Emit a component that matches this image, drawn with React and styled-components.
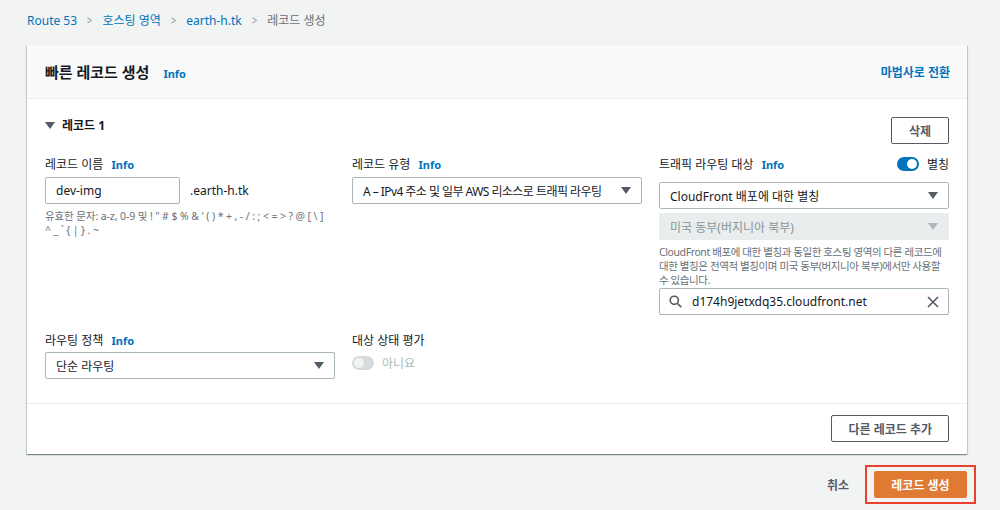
import React from "react"
import styled, { createGlobalStyle } from "styled-components"

const colors = {
	page: "#f2f3f3",
	text: "#16191f",
	grey: "#687078",
	link: "#0073bb",
	border: "#aab7b8",
	divider: "#eaeded",
	orange: "#e07a32",
}

const GlobalStyle = createGlobalStyle`
	html, body {
		margin: 0;
		background: ${colors.page};
		font-family: "Noto Sans", "Noto Sans CJK KR", sans-serif;
		color: ${colors.text};
		font-size: 12px;
	}
	* { box-sizing: border-box; }
`

const Page = styled.div`
	width: 1000px;
	height: 510px;
	padding: 11px 33px 0 27px;
	overflow: hidden;
`

const Breadcrumbs = styled.nav`
	display: flex;
	align-items: center;
	gap: 9px;
	height: 18px;
	font-size: 12px;
	margin-bottom: 16px;
`

const Crumb = styled.span`
	color: ${p => (p.$current ? colors.grey : colors.link)};
`

const Chevron = styled.span`
	color: #879596;
	font-size: 13px;
	transform: scaleX(0.7);
`

const Card = styled.section`
	background: #fff;
	box-shadow: 0 1px 1px 0 rgba(0, 28, 36, 0.3), 1px 1px 1px 0 rgba(0, 28, 36, 0.15),
		-1px 1px 1px 0 rgba(0, 28, 36, 0.15);
`

const CardHeader = styled.header`
	display: flex;
	align-items: center;
	justify-content: space-between;
	height: 54px;
	padding: 0 17px 0 18px;
	background: #fafafa;
	border-bottom: 1px solid ${colors.divider};
`

const Title = styled.h2`
	margin: 0;
	font-size: 15px;
	font-weight: 700;
	display: flex;
	align-items: baseline;
	gap: 14px;
`

const Info = styled.a`
	color: ${colors.link};
	font-weight: 700;
	font-size: 11px;
	margin-left: ${p => p.$gap ?? 5}px;
`

const HeaderLink = styled.a`
	color: ${colors.link};
	font-weight: 700;
	font-size: 12px;
`

const CardBody = styled.div`
	padding: 18px 18px 24px 18px;
	border-bottom: 1px solid ${colors.divider};
`

const RecordHead = styled.div`
	display: flex;
	align-items: flex-start;
	justify-content: space-between;
	height: 27px;
	margin-bottom: 12px;
`

const RecordTitle = styled.div`
	display: flex;
	align-items: center;
	gap: 7px;
	font-weight: 700;
	font-size: 12px;
	margin-top: -1px;
`

const Button = styled.button`
	height: 27px;
	padding: 0 ${p => p.$pad || 16}px;
	background: #fff;
	border: 1px solid #545b64;
	border-radius: 2px;
	font-family: inherit;
	font-size: 12px;
	font-weight: 700;
	color: #545b64;
`

const Grid = styled.div`
	display: grid;
	grid-template-columns: repeat(3, 290px);
	column-gap: 17px;
	row-gap: 17px;
`

const Field = styled.div`
	display: flex;
	flex-direction: column;
`

const LabelRow = styled.div`
	display: flex;
	align-items: center;
	justify-content: space-between;
	height: 16px;
	margin-bottom: ${p => p.$mb || 5}px;
	font-size: 12px;
`

const ToggleWrap = styled.span`
	display: flex;
	align-items: center;
	gap: 8px;
	color: ${p => (p.$off ? "#aab7b8" : colors.text)};
`

const Track = styled.span`
	position: relative;
	width: 22px;
	height: 14px;
	border-radius: 7px;
	background: ${p => (p.$on ? colors.link : "#d5dbdb")};
	&::after {
		content: "";
		position: absolute;
		top: 2px;
		left: ${p => (p.$on ? 10 : 2)}px;
		width: 10px;
		height: 10px;
		border-radius: 50%;
		background: ${p => (p.$on ? "#fff" : "#f2f3f3")};
	}
`

const InputRow = styled.div`
	display: flex;
	align-items: center;
	gap: 10px;
`

const Input = styled.div`
	display: flex;
	align-items: center;
	gap: 10px;
	height: 27px;
	width: ${p => p.$w || "100%"};
	padding: 0 ${p => (p.$icon ? 9 : 10)}px;
	border: 1px solid ${p => (p.$disabled ? "#eaeded" : colors.border)};
	border-radius: 2px;
	background: ${p => (p.$disabled ? "#eaeded" : "#fff")};
	color: ${p => (p.$disabled ? "#879596" : colors.text)};
	font-size: 12px;
	white-space: nowrap;
	margin-top: ${p => p.$mt || 0}px;
`

const Value = styled.span`
	flex: 1;
	overflow: hidden;
	letter-spacing: ${p => p.$ls || 0}px;
`

const Hint = styled.p`
	margin: 5px 0 0;
	font-size: 10.5px;
	line-height: 14px;
	color: ${colors.grey};
	letter-spacing: ${p => p.$ls ?? -0.1}px;
`

const Footer = styled.div`
	display: flex;
	justify-content: flex-end;
	padding: 11px 18px 12px;
`

const Actions = styled.div`
	display: flex;
	align-items: center;
	justify-content: flex-end;
	gap: 16px;
	margin-top: 11px;
	margin-right: -9px;
`

const TextButton = styled.span`
	font-weight: 700;
	font-size: 12px;
	color: #545b64;
`

const Highlight = styled.span`
	display: flex;
	padding: 4px 7px;
	border: 2px solid #e8412e;
`

const Primary = styled.button`
	height: 27px;
	width: 93px;
	border: none;
	border-radius: 2px;
	background: ${colors.orange};
	color: #fff;
	font-family: inherit;
	font-size: 12px;
	font-weight: 700;
`

const Caret = ({ color = "#545b64" }) => (
	<svg width="10" height="7" viewBox="0 0 10 7">
		<path d="M0 0h10L5 7z" fill={color} />
	</svg>
)

const SearchIcon = () => (
	<svg width="13" height="13" viewBox="0 0 16 16" fill="none" stroke="#545b64" strokeWidth="2">
		<circle cx="6.5" cy="6.5" r="5" />
		<path d="M10.5 10.5L15 15" />
	</svg>
)

const CloseIcon = () => (
	<svg width="12" height="12" viewBox="0 0 12 12" stroke="#545b64" strokeWidth="1.6">
		<path d="M1 1l10 10M11 1L1 11" />
	</svg>
)

export default function App() {
	return (
		<>
			<GlobalStyle />
			<Page>
				<Breadcrumbs>
					<Crumb>Route 53</Crumb>
					<Chevron>&gt;</Chevron>
					<Crumb>호스팅 영역</Crumb>
					<Chevron>&gt;</Chevron>
					<Crumb>earth-h.tk</Crumb>
					<Chevron>&gt;</Chevron>
					<Crumb $current>레코드 생성</Crumb>
				</Breadcrumbs>
				<Card>
					<CardHeader>
						<Title>
							빠른 레코드 생성<Info $gap={0}>Info</Info>
						</Title>
						<HeaderLink>마법사로 전환</HeaderLink>
					</CardHeader>
					<CardBody>
						<RecordHead>
							<RecordTitle>
								<Caret />
								레코드 1
							</RecordTitle>
							<Button $pad={17}>삭제</Button>
						</RecordHead>
						<Grid>
							<Field>
								<LabelRow>
									<span>
										레코드 이름 <Info>Info</Info>
									</span>
								</LabelRow>
								<InputRow>
									<Input $w="135px">dev-img</Input>
									<span>.earth-h.tk</span>
								</InputRow>
								<Hint>
									유효한 문자: a-z, 0-9 및 ! " # $ % &amp; ' ( ) * + , - / : ; &lt; = &gt; ? @ [ \ ]
									<br />^ _ ` {"{"} | {"}"} . ~
								</Hint>
							</Field>
							<Field>
								<LabelRow>
									<span>
										레코드 유형 <Info>Info</Info>
									</span>
								</LabelRow>
								<Input>
									<Value $ls={-0.55}>A – IPv4 주소 및 일부 AWS 리소스로 트래픽 라우팅</Value>
									<Caret />
								</Input>
							</Field>
							<Field>
								<LabelRow $mb={10}>
									<span>
										트래픽 라우팅 대상 <Info>Info</Info>
									</span>
									<ToggleWrap>
										<Track $on />
										별칭
									</ToggleWrap>
								</LabelRow>
								<Input>
									<Value>CloudFront 배포에 대한 별칭</Value>
									<Caret />
								</Input>
								<Input $disabled $mt={4}>
									<Value>미국 동부(버지니아 북부)</Value>
									<Caret color="#aab7b8" />
								</Input>
								<Hint $ls={-0.4}>
									CloudFront 배포에 대한 별칭과 동일한 호스팅 영역의 다른 레코드에 대한 별칭은 전역적
									별칭이며 미국 동부(버지니아 북부)에서만 사용할 수 있습니다.
								</Hint>
								<Input $icon $mt={1}>
									<SearchIcon />
									<Value>d174h9jetxdq35.cloudfront.net</Value>
									<CloseIcon />
								</Input>
							</Field>
							<Field>
								<LabelRow $mb={4}>
									<span>
										라우팅 정책 <Info>Info</Info>
									</span>
								</LabelRow>
								<Input>
									<Value>단순 라우팅</Value>
									<Caret />
								</Input>
							</Field>
							<Field>
								<LabelRow $mb={6}>
									<span>대상 상태 평가</span>
								</LabelRow>
								<ToggleWrap $off>
									<Track />
									아니요
								</ToggleWrap>
							</Field>
						</Grid>
					</CardBody>
					<Footer>
						<Button>다른 레코드 추가</Button>
					</Footer>
				</Card>
				<Actions>
					<TextButton>취소</TextButton>
					<Highlight>
						<Primary>레코드 생성</Primary>
					</Highlight>
				</Actions>
			</Page>
		</>
	)
}
